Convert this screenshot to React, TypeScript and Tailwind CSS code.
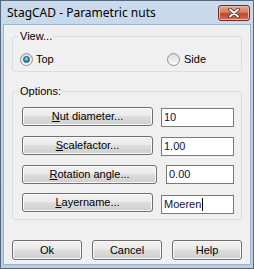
import React from "react";

function Btn({
  children,
  className = "",
}: {
  children: React.ReactNode;
  className?: string;
}) {
  return (
    <button
      className={
        "flex shrink-0 items-center justify-center rounded-[3px] border border-[#707070] bg-[linear-gradient(#f2f2f2,#ebebeb_45%,#dddddd_50%,#cfcfcf)] text-[11px] leading-none text-black shadow-[inset_0_0_0_1px_#fbfbfb] " +
        className
      }
    >
      {children}
    </button>
  );
}

function Field({ value, caret, className = "" }: { value: string; caret?: boolean; className?: string }) {
  return (
    <div
      className={
        "flex h-[19px] shrink-0 items-center border border-[#7a7a7a] bg-white pl-[2px] text-[11px] text-[#101040] " +
        className
      }
    >
      {value}
      {caret && <span className="ml-[1px] inline-block h-[13px] w-px bg-black" />}
    </div>
  );
}

function Radio({ checked, label, gap }: { checked?: boolean; label: string; gap: string }) {
  return (
    <div className={"flex items-center " + gap}>
      <span className="flex h-[13px] w-[13px] items-center justify-center rounded-full border border-[#8e8f8f] bg-[linear-gradient(#dcdcdc,#fbfbfb)]">
        {checked && (
          <span className="h-[7px] w-[7px] rounded-full border border-[#1b4f7a] bg-[radial-gradient(circle_at_50%_35%,#9be0ff,#2f88c8_60%,#1a5d96)]" />
        )}
      </span>
      <span className="text-[11px] leading-[13px] text-black">{label}</span>
    </div>
  );
}

export default function App() {
  return (
    <div className="flex h-[269px] w-[254px] flex-col border border-[#56687d] bg-[linear-gradient(#cbdbed,#bfd1e7_40%,#b9cde4)] font-['Liberation_Sans',Arial,sans-serif]">
      {/* Title bar */}
      <div className="flex h-[24px] shrink-0 items-start justify-between pl-[6px] pr-[3px]">
        <span className="mt-[5px] font-['Noto_Sans',sans-serif] text-[12px] leading-[14px] text-black">
          StagCAD - Parametric nuts
        </span>
        <div className="mt-[4px] flex h-[16px] w-[32px] items-center justify-center rounded-[3px] border border-[#6b2a22] bg-[linear-gradient(#e4a592,#d57b64_45%,#c2452c_55%,#d0705a)] shadow-[inset_0_0_0_1px_#f0b9a8]">
          <svg width="12" height="10" viewBox="0 0 12 10">
            <path d="M2 1.5 L10 8.5 M10 1.5 L2 8.5" stroke="#4a2a24" strokeWidth="3.6" strokeLinecap="round" />
            <path d="M2 1.5 L10 8.5 M10 1.5 L2 8.5" stroke="#ffffff" strokeWidth="2" strokeLinecap="round" />
          </svg>
        </div>
      </div>

      {/* Client area */}
      <div className="mx-[3px] flex h-[239px] flex-col bg-[#f0f0f0] px-[8px] pt-[4px] shadow-[0_0_0_1px_#9fb3ca]">
        <fieldset className="rounded-[3px] border border-[#d5dfe5] pb-[5px]">
          <legend className="ml-[6px] px-[1px] text-[11px] leading-[14px] text-black">View...</legend>
          <div className="mt-[10px] flex pl-[7px]">
            <div className="w-[147px]">
              <Radio checked label="Top" gap="gap-[3px]" />
            </div>
            <Radio label="Side" gap="gap-[4px]" />
          </div>
        </fieldset>

        <fieldset className="mt-[12px] rounded-[3px] border border-[#d5dfe5] pb-[5px]">
          <legend className="ml-[6px] px-[1px] text-[11px] leading-[14px] text-black">Options:</legend>
          <div className="mt-[9px] flex flex-col gap-[9px] pl-[9px]">
            <div className="flex items-start">
              <Btn className="h-[19px] w-[131px]">
                <span><u>N</u>ut diameter...</span>
              </Btn>
              <Field value="10" className="ml-[8px] mt-[1px] w-[73px]" />
            </div>
            <div className="flex items-start">
              <Btn className="h-[19px] w-[131px]">
                <span><u>S</u>calefactor...</span>
              </Btn>
              <Field value="1.00" className="ml-[8px] mt-[1px] w-[73px]" />
            </div>
            <div className="flex items-start">
              <Btn className="h-[19px] w-[135px]">
                <span><u>R</u>otation angle...</span>
              </Btn>
              <Field value="0.00" className="ml-[9px] w-[68px]" />
            </div>
            <div className="flex items-start">
              <Btn className="h-[19px] w-[131px]">
                <span><u>L</u>ayername...</span>
              </Btn>
              <Field value="Moeren" caret className="ml-[8px] mt-[2px] w-[73px]" />
            </div>
          </div>
        </fieldset>

        <div className="mt-[20px] flex gap-[10px]">
          <Btn className="h-[20px] w-[70px]">Ok</Btn>
          <Btn className="h-[20px] w-[70px]">Cancel</Btn>
          <Btn className="h-[20px] w-[70px]">Help</Btn>
        </div>
      </div>
    </div>
  );
}
